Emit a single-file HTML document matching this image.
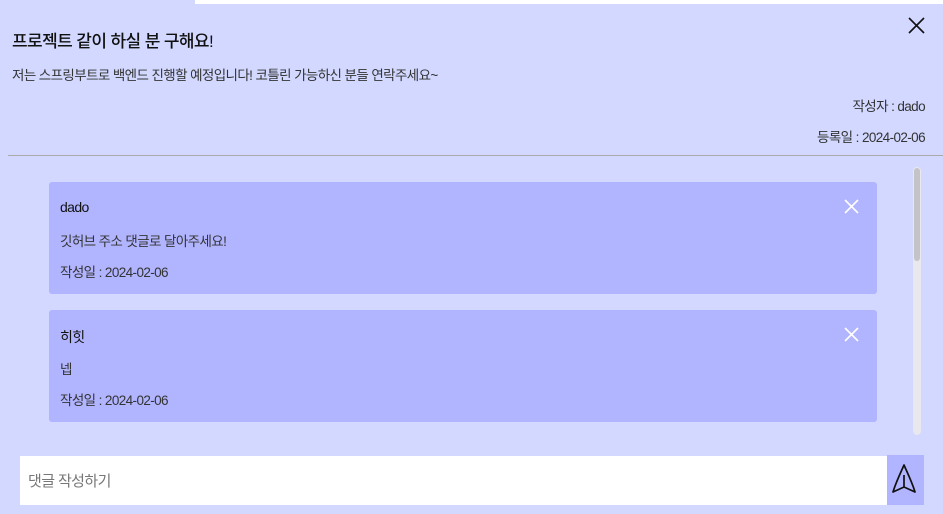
<!DOCTYPE html>
<html><head><meta charset="utf-8"><style>
*{margin:0;padding:0;box-sizing:border-box}
body{width:943px;height:514px;background:#d2d8ff;font-family:"Liberation Sans","Noto Sans CJK KR",sans-serif;position:relative;overflow:hidden;color:#111;letter-spacing:-0.6px}
.a{position:absolute;white-space:nowrap}
.card{position:absolute;left:49px;width:828px;height:112px;background:#b1b4ff;border-radius:3px}
.x{position:absolute}
</style></head><body>
<div class="a" style="left:195px;top:0;width:748px;height:4px;background:#fff"></div>
<div class="a" style="left:12px;top:27px;font-size:17px;color:#111;font-weight:500">프로젝트 같이 하실 분 구해요!</div>
<div class="a" style="left:12px;top:64px;font-size:13.5px;color:#333">저는 스프링부트로 백엔드 진행할 예정입니다! 코틀린 가능하신 분들 연락주세요~</div>
<svg class="x" style="left:908px;top:17px" width="17" height="17"><path d="M1 1L16 16M16 1L1 16" stroke="#111" stroke-width="1.6"/></svg>
<div class="a" style="right:18px;top:95px;font-size:13.5px;color:#333">작성자 : dado</div>
<div class="a" style="right:18px;top:126px;font-size:13.5px;color:#333">등록일 : 2024-02-06</div>
<div class="a" style="left:8px;top:155px;width:935px;height:1px;background:#aaa"></div>

<div class="card" style="top:182px">
<div class="a" style="left:11px;top:17px;font-size:14px;color:#111">dado</div>
<div class="a" style="left:11px;top:48px;font-size:13.5px;color:#333">깃허브 주소 댓글로 달아주세요!</div>
<div class="a" style="left:11px;top:79px;font-size:13.5px;color:#333">작성일 : 2024-02-06</div>
<svg class="x" style="left:795px;top:17px" width="15" height="15"><path d="M1 1L14 14M14 1L1 14" stroke="#fff" stroke-width="1.6"/></svg>
</div>
<div class="card" style="top:310px">
<div class="a" style="left:11px;top:17px;font-size:14px;color:#111">히힛</div>
<div class="a" style="left:11px;top:48px;font-size:13.5px;color:#333">넵</div>
<div class="a" style="left:11px;top:79px;font-size:13.5px;color:#333">작성일 : 2024-02-06</div>
<svg class="x" style="left:795px;top:17px" width="15" height="15"><path d="M1 1L14 14M14 1L1 14" stroke="#fff" stroke-width="1.6"/></svg>
</div>
<div class="a" style="left:913px;top:167px;width:8px;height:268px;background:#e8e8ee;border-radius:4px"></div>
<div class="a" style="left:914px;top:168px;width:6px;height:93px;background:#c4c4c8;border-radius:3px"></div>

<div class="a" style="left:20px;top:456px;width:867px;height:49px;background:#fff"></div>
<div class="a" style="left:28px;top:470px;font-size:15px;color:#777">댓글 작성하기</div>
<div class="a" style="left:887px;top:455px;width:37px;height:50px;background:#b1b4ff"></div>
<svg class="x" style="left:890px;top:462px" width="30" height="34"><path d="M14 3C11 10 6 20 3 30L14 25L25 30C22 20 17 10 14 3Z M14 13V25" fill="none" stroke="#111" stroke-width="1.7" stroke-linejoin="round"/></svg>
</body></html>
